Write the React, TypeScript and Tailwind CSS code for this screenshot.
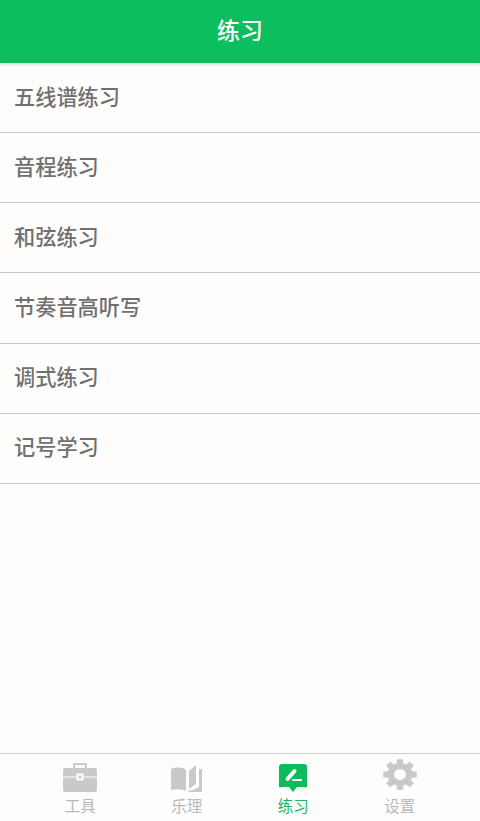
const CJK = "font-['Noto_Sans_CJK_SC','Noto_Sans',sans-serif]"

const rows = ['五线谱练习', '音程练习', '和弦练习', '节奏音高听写', '调式练习', '记号学习']

// outline of an 8-tooth gear centred on 17,17
function gearPath(): string {
  const points: string[] = []
  for (let i = 0; i < 8; i++) {
    const a = (i * Math.PI) / 4 - Math.PI / 2
    const at = (r: number, d: number): string =>
      `${(17 + r * Math.cos(a + d)).toFixed(2)} ${(17 + r * Math.sin(a + d)).toFixed(2)}`
    points.push(at(12.5, -0.28), at(17, -0.17), at(17, 0.17), at(12.5, 0.28))
  }
  return `M${points.join('L')}Z`
}

function IconTools(): React.ReactElement {
  return (
    <svg viewBox="0 0 34 29" className="w-[34px] h-[29px]">
      <path d="M11 5V2a1 1 0 0 1 1-1h10a1 1 0 0 1 1 1v3" fill="none" stroke="#c9c9c9" strokeWidth="2" />
      <path d="M2 5h30a2 2 0 0 1 2 2v6.500H0V7a2 2 0 0 1 2-2z" fill="#c9c9c9" />
      <path d="M0 14.500h34V27a2 2 0 0 1-2 2H2a2 2 0 0 1-2-2z" fill="#c9c9c9" />
      <rect x="13.500" y="10.500" width="7" height="7" rx="1" fill="#fff" />
      <rect x="15.500" y="12.500" width="3" height="3" fill="#c9c9c9" />
    </svg>
  )
}

function IconBook(): React.ReactElement {
  return (
    <svg viewBox="0 0 31 27" className="w-[31px] h-[27px]">
      <path d="M0 4c5-2 11-2 15 1v21c-4-2-10-2-15-1z" fill="#c9c9c9" />
      <path d="M18 6l7-6v19l-7 5z" fill="#c9c9c9" />
      <path d="M28 4h3v23H17v-1c4-1 8-2 11-4z" fill="#c9c9c9" />
    </svg>
  )
}

function IconPractice(): React.ReactElement {
  return (
    <svg viewBox="0 0 28 28" className="w-[28px] h-[28px]">
      <path d="M3 0h22a3 3 0 0 1 3 3v20a3 3 0 0 1-3 0h-7l-4 5-4-5H3a3 3 0 0 1-3 0V3a3 3 0 0 1 3-3z" fill="#0cbc5c" />
      <path d="M3 23h22a3 3 0 0 0 3-3V10H0v10a3 3 0 0 0 3 3z" fill="#0cbc5c" />
      <path d="M8.500 15l7-8" stroke="#fff" strokeWidth="4" strokeLinecap="round" />
      <path d="M14 16h8" stroke="#fff" strokeWidth="2.200" strokeLinecap="round" />
    </svg>
  )
}

function IconGear(): React.ReactElement {
  return (
    <svg viewBox="0 0 34 34" preserveAspectRatio="none" className="w-[34px] h-[31px] mb-[2px]">
      <path fill="#c9c9c9" d={gearPath()} />
      <circle cx="17" cy="17" r="6" fill="#fefdfc" />
    </svg>
  )
}

const tabs = [
  { label: '工具', icon: <IconTools />, active: false },
  { label: '乐理', icon: <IconBook />, active: false },
  { label: '练习', icon: <IconPractice />, active: true },
  { label: '设置', icon: <IconGear />, active: false },
]

export default function App(): React.ReactElement {
  return (
    <div className={`w-[480px] h-[821px] flex flex-col bg-[#fefdfc] overflow-hidden ${CJK}`}>
      <header className="h-[63px] shrink-0 flex items-center justify-center pb-[4px] bg-[#0cbe5d] shadow-[0_2px_3px_rgba(0,0,0,0.12)] text-white text-[23px] font-medium">
        练习
      </header>
      <ul className="flex flex-col">
        {rows.map((row, i) => (
          <li
            key={row}
            className={`${i === 0 ? 'h-[70px]' : 'h-[70.2px]'} flex items-center pl-[14px] pb-[4px] border-b border-[#c6c6c6] text-[21.200px] font-medium text-[#707070]`}
          >
            {row}
          </li>
        ))}
      </ul>
      <div className="flex-1" />
      <nav className="h-[68px] shrink-0 border-t border-[#cfcfcf] flex px-[27px]">
        {tabs.map((tab) => (
          <div key={tab.label} className="w-[106.500px] flex flex-col items-center">
            <div className="h-[38px] flex items-end justify-center">{tab.icon}</div>
            <span className={`text-[15.500px] leading-[20px] mt-[3px] ${tab.active ? 'text-[#1eb566]' : 'text-[#b9b9b9]'}`}>
              {tab.label}
            </span>
          </div>
        ))}
      </nav>
    </div>
  )
}
